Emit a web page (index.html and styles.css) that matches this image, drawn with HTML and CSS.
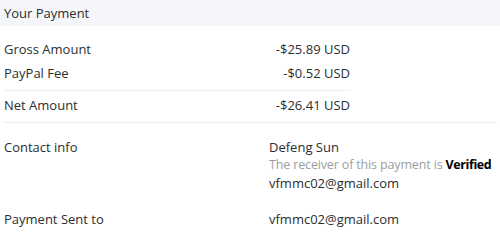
FILE: index.html
```html
<!DOCTYPE html>
<html>
<head>
<meta charset="utf-8">
<link rel="stylesheet" href="styles.css">
</head>
<body>
<div class="header">Your Payment</div>
<div class="amounts">
  <div class="row gross"><span class="label">Gross Amount</span><span class="amt">-$25.89 USD</span></div>
  <div class="row fee"><span class="label">PayPal Fee</span><span class="amt">-$0.52 USD</span></div>
  <div class="row net"><span class="label">Net Amount</span><span class="amt">-$26.41 USD</span></div>
</div>
<div class="details">
  <div class="drow contact">
    <div class="label">Contact info</div>
    <div class="val">
      <div>Defeng Sun</div>
      <div class="muted">The receiver of this payment is <b>Verified</b></div>
      <div>vfmmc02@gmail.com</div>
    </div>
  </div>
  <div class="drow sent">
    <div class="label">Payment Sent to</div>
    <div class="val"><div>vfmmc02@gmail.com</div></div>
  </div>
</div>
</body>
</html>
```
FILE: styles.css
```css
html, body { margin: 0; padding: 0; background: #fff; }
body {
  width: 500px;
  height: 240px;
  overflow: hidden;
  font-family: "Open Sans", "Noto Sans", sans-serif;
  font-size: 13px;
  color: #2c2e2f;
}
.header {
  height: 26px;
  line-height: 26px;
  background: #f5f6f9;
  padding-left: 4px;
}
.amounts {
  width: 346px;
  margin-left: 4px;
  padding-top: 12px;
}
.row {
  display: flex;
  justify-content: space-between;
  height: 24px;
  line-height: 22px;
}
.row.fee {
  border-bottom: 1px solid #eceeef;
  height: 28px;
  line-height: 22px;
}
.row.net {
  padding-top: 2px;
  height: 29px;
  line-height: 24px;
}
.details {
  border-top: 1px solid #eceeef;
  margin: 0 3px;
  padding-top: 15px;
}
.drow {
  display: grid;
  grid-template-columns: 266px 1fr;
}
.drow .label { padding-left: 1px; line-height: 18px; }
.val { line-height: 18px; white-space: nowrap; }
.muted { color: #9aa0a4; font-size: 12.5px; letter-spacing: -0.15px; }
.muted b { color: #000; font-weight: 700; letter-spacing: -0.4px; }
.drow.sent { margin-top: 18px; }
```
